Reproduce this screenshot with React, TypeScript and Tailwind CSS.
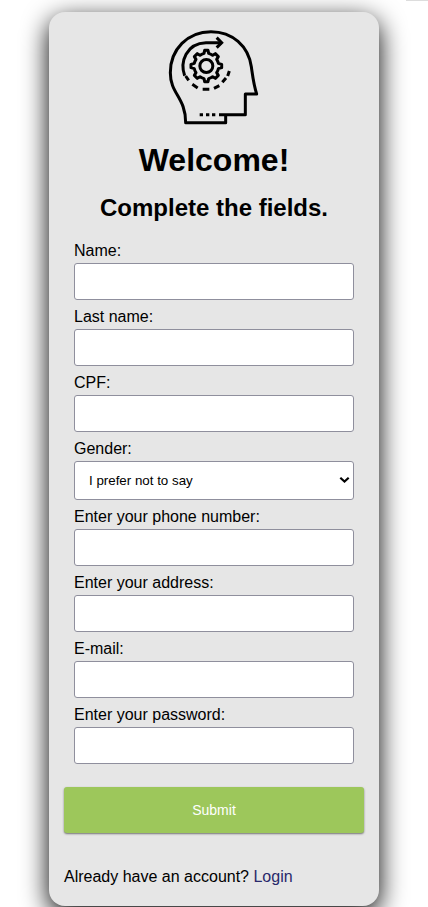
import React from "react";

function HeadGear() {
  return (
    <svg className="block h-[115px] w-[120px]" viewBox="0 0 360 345" fill="none" stroke="#000" strokeWidth="9">
      <path d="M192 284H271V222H305C295 190 293 168 289 140C280 78 232 35 168 35C98 35 46 88 46 158C46 222 92 232 92 308H212V284" strokeLinejoin="round" />
      <path d="M134 284H144M153 284H163M171 284H181" />
      <path d="M89 167C74 125 94 70 153 68H201" />
      <path d="M185 53L200 68L185 83" />
      <path d="M92 168L101 181M112 193L128 204M143 208H163M177 205L193 197M202 187L213 174M218 168L223 153" />
      <circle cx="154" cy="138" r="19.5" />
      <path
        strokeLinejoin="round"
        d="M147 100L149 91H159L161 100Q168 102 173 106L181 101L190 110L185 118Q189 124 190 130L200 133V143L190 146Q189 152 185 158L190 166L181 175L173 170Q168 174 161 176L159 185H149L147 176Q140 174 135 170L127 175L118 166L123 158Q119 152 118 146L108 143V133L118 130Q119 124 123 118L118 110L127 101L135 106Q140 102 147 100Z"
      />
    </svg>
  );
}

const control = "block w-full rounded-[3px] border border-[#8f8f9d] bg-white";

function Field({ label, type = "text" }: { label: string; type?: string }) {
  return (
    <label className="block h-[66px]">
      <span className="block h-[21px] leading-[18px]">{label}</span>
      <input type={type} className={`${control} h-[37px] px-3.5`} />
    </label>
  );
}

export default function App() {
  return (
    <div className="h-[907px] overflow-hidden bg-white font-['Liberation_Sans',Arial,sans-serif] text-base text-black">
      <div className="ml-auto h-px w-[22px] bg-[#dddddd]" />
      <main className="mx-auto mt-[11px] h-[894px] w-[330px] rounded-[16px] bg-[#e6e6e6] px-[15px] pt-2 shadow-[0_8px_27px_#000]">
        <div className="flex justify-center pl-[2px]">
          <HeadGear />
        </div>
        <h1 className="mt-[7px] text-center text-[32px] leading-[37px] font-bold">Welcome!</h1>
        <h2 className="mt-[15px] text-center text-[24px] leading-[28px] font-bold">Complete the fields.</h2>
        <form onSubmit={(e) => e.preventDefault()}>
          <div className="px-[10px] pt-[20px]">
            <Field label="Name:" />
            <Field label="Last name:" />
            <Field label="CPF:" />
            <label className="block h-[68px]">
              <span className="block h-[21px] leading-[18px]">Gender:</span>
              <span className="relative block">
                <select className={`${control} h-[39px] appearance-none pl-[14px] text-[13.333px]`}>
                  <option>I prefer not to say</option>
                </select>
                <svg className="absolute top-[15px] right-[4px] h-[8px] w-[11px]" viewBox="0 0 11 8" fill="none" stroke="#000" strokeWidth="2.2">
                  <path d="M1.3 1.7L5.5 5.5L9.7 1.7" />
                </svg>
              </span>
            </label>
            <Field label="Enter your phone number:" />
            <Field label="Enter your address:" />
            <Field label="E-mail:" />
            <Field label="Enter your password:" type="password" />
          </div>
          <button className="mt-[15px] block h-[46px] w-full rounded-[3px] bg-[#9dc75b] text-[14px] text-white shadow-[0_1px_2px_rgba(0,0,0,0.5)]">
            Submit
          </button>
        </form>
        <p className="mt-[35px] leading-[18px]">
          Already have an account? <a className="text-[#29296b]">Login</a>
        </p>
      </main>
    </div>
  );
}
